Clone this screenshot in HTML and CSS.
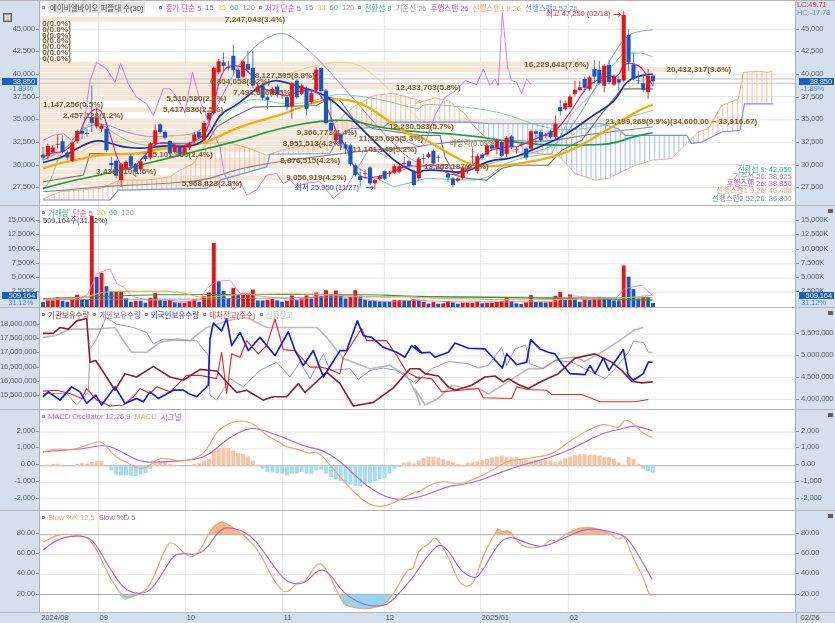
FILE: index.html
```html
<!DOCTYPE html>
<html lang="ko">
<head>
<meta charset="UTF-8">
<title>에이비엘바이오 차트</title>
<link rel="stylesheet" href="styles.css">
</head>
<body>

<div class="chart">

  <!-- 가격 -->
  <section class="pane pane-main">
    <div class="axis axis-left axis-price">
      <span class="menu-btn"><i></i></span>
      <span>45,000</span><span>42,500</span><span>40,000</span><span>37,500</span>
      <span>35,000</span><span>32,500</span><span>30,000</span><span>27,500</span>
      <b class="now-price">38,850</b>
      <em class="now-rate">-1.89%</em>
    </div>
    <div class="plot">
      <svg id="chartMain" viewBox="120 0 2265 615" preserveAspectRatio="none">
        <defs>
          <pattern id="hatchOrange" patternUnits="userSpaceOnUse" width="14.64" height="12">
            <line x1="2" y1="0" x2="2" y2="12" stroke="#f8bb96" stroke-width="3"/>
          </pattern>
          <pattern id="hatchBlue" patternUnits="userSpaceOnUse" width="14.64" height="12">
            <line x1="2" y1="0" x2="2" y2="12" stroke="#9db8f2" stroke-width="3"/>
          </pattern>
        </defs>
      </svg>
      <div class="legend">
        <i class="mark"></i><span class="title">에이비엘바이오 퍼플대 수(30)</span>
        <i class="mark gap-m"></i><span class="c-pink">종가 단순 5</span><span class="c-blue">15</span><span class="c-gold">33</span><span class="c-green">60</span><span class="c-gray">120</span>
        <i class="mark"></i><span class="c-pink">저가 단순 5</span><span class="c-blue">15</span><span class="c-gold">33</span><span class="c-green">60</span><span class="c-gray">120</span>
        <i class="mark"></i><span class="c-teal">전환선 9</span><span class="c-gray">기준선 26</span><span class="c-violet">후행스팬 26</span><span class="c-peach">선행스팬1 9,26</span><span class="c-sky">선행스팬2 52,26</span>
      </div>
    </div>
    <div class="axis axis-right axis-price">
      <span class="lc-hc"><u class="c-red">LC:49.71</u><u class="c-sky">HC:-17.78</u></span>
      <span>45,000</span><span>42,500</span><span>40,000</span><span>37,500</span>
      <span>35,000</span><span>32,500</span><span>30,000</span><span>27,500</span>
      <b class="now-price">38,850</b>
      <em class="now-rate">-1.89%</em>
    </div>
  </section>

  <!-- 거래량 -->
  <section class="pane pane-volume">
    <div class="axis axis-left axis-volume">
      <span>15,000K</span><span>12,500K</span><span>10,000K</span><span>7,500K</span><span>5,000K</span><span>2,500K</span>
      <b class="now-volume">509,164</b>
      <em class="now-share">31.12%</em>
    </div>
    <div class="plot">
      <svg id="chartVolume" viewBox="120 0 2265 306" preserveAspectRatio="none"></svg>
      <div class="legend">
        <i class="mark"></i><span class="c-teal">거래량</span><span class="c-pink">단순 5</span><span class="c-gold">20</span><span class="c-green">60</span><span class="c-gray">120</span>
      </div>
      <div class="legend-sub">509,164주(31.12%)</div>
    </div>
    <div class="axis axis-right axis-volume">
      <span>15,000K</span><span>12,500K</span><span>10,000K</span><span>7,500K</span><span>5,000K</span><span>2,500K</span>
      <span class="fold-btn"></span>
      <b class="now-volume">509,164</b>
      <em class="now-share">31.12%</em>
    </div>
  </section>

  <!-- 보유수량 -->
  <section class="pane pane-holders">
    <div class="axis axis-left axis-holders-left">
      <span>18,000,000</span><span>17,500,000</span><span>17,000,000</span><span>16,500,000</span><span>16,000,000</span><span>15,500,000</span>
    </div>
    <div class="plot">
      <svg id="chartHolders" viewBox="120 306 2265 306" preserveAspectRatio="none"></svg>
      <div class="legend">
        <i class="mark"></i><span class="c-maroon">기관보유수량</span>
        <i class="mark"></i><span class="c-purple">개인보유수량</span>
        <i class="mark"></i><span class="c-navy">외국인보유수량</span>
        <i class="mark"></i><span class="c-red">대차잔고(주수)</span>
        <i class="mark"></i><span class="c-silver">신용잔고</span>
      </div>
    </div>
    <div class="axis axis-right axis-holders-right">
      <span>5,500,000</span><span>5,000,000</span><span>4,500,000</span><span>4,000,000</span>
      <span class="fold-btn"></span>
    </div>
  </section>

  <!-- MACD -->
  <section class="pane pane-macd">
    <div class="axis axis-left axis-macd">
      <span>2,000</span><span>1,000</span><span>0.00</span><span>-1,000</span><span>-2,000</span>
    </div>
    <div class="plot">
      <svg id="chartMacd" viewBox="120 12 2265 303" preserveAspectRatio="none"></svg>
      <div class="legend">
        <i class="mark"></i><span class="c-orchid">MACD Oscillator 12,26,9</span><span class="c-peach">MACD</span><span class="c-plum">시그널</span>
      </div>
    </div>
    <div class="axis axis-right axis-macd">
      <span>2,000</span><span>1,000</span><span>0.00</span><span>-1,000</span><span>-2,000</span>
      <span class="fold-btn"></span>
    </div>
  </section>

  <!-- 스토캐스틱 -->
  <section class="pane pane-slow">
    <div class="axis axis-left axis-slow">
      <span>80.00</span><span>60.00</span><span>40.00</span><span>20.00</span>
    </div>
    <div class="plot">
      <svg id="chartSlow" viewBox="120 315 2265 306" preserveAspectRatio="none"></svg>
      <div class="legend">
        <i class="mark"></i><span class="c-peach">Slow %K 12,5</span><span class="c-plum">Slow %D 5</span>
      </div>
    </div>
    <div class="axis axis-right axis-slow">
      <span>80.00</span><span>60.00</span><span>40.00</span><span>20.00</span>
      <span class="fold-btn"></span>
    </div>
  </section>

  <!-- 날짜 -->
  <footer class="dates">
    <span></span>
    <span>2024/08</span><span>09</span><span>10</span><span>11</span><span>12</span><span>2025/01</span><span>02</span>
    <span>02/26</span>
  </footer>

</div>

<script src="script.js"></script>
</body>
</html>
```

FILE: styles.css
```css
html, body {
  margin: 0;
  padding: 0;
  background: #fff;
}

.chart {
  width: 835px;
  height: 623px;
  overflow: hidden;
  display: flex;
  flex-direction: column;
  font-family: "Liberation Sans", "Noto Sans CJK KR", sans-serif;
  font-size: 8px;
  color: #555;
  filter: blur(0.35px);
}

.pane {
  display: flex;
  border-top: 1.5px solid #b5b5b5;
  box-sizing: border-box;
}
.pane-main { height: 205px; }
.pane-volume { height: 102px; }
.pane-holders { height: 102px; }
.pane-macd { height: 101px; }
.pane-slow { height: 102px; }

.plot {
  position: relative;
  width: 755px;
  background: #fff;
}
.plot svg {
  display: block;
  width: 755px;
  height: 100%;
}

/* 축 */
.axis {
  position: relative;
  width: 40px;
  flex: none;
  box-sizing: border-box;
  display: flex;
  flex-direction: column;
  background: #d4e0ee;
  color: #5c6670;
  font-size: 7.6px;
  letter-spacing: -0.15px;
}
.axis > span {
  height: 12px;
  line-height: 12px;
  white-space: nowrap;
  position: relative;
}
.axis-left {
  text-align: right;
  padding-right: 4px;
  border-right: 1px solid #a9b0b8;
}
.axis-right {
  padding-left: 5px;
  border-left: 1px solid #a9b0b8;
}
.axis-left > span::after,
.axis-right > span::after {
  content: "";
  position: absolute;
  top: 6px;
  width: 3px;
  height: 1px;
  background: #8b949e;
}
.axis-left > span::after { right: -4px; }
.axis-right > span::after { left: -5px; }

.axis-price { padding-top: 21.5px; row-gap: 10.7px; }
.axis-volume { padding-top: 8px; row-gap: 2.3px; }
.axis-holders-left { padding-top: 9.5px; row-gap: 2.4px; }
.axis-holders-right { padding-top: 19.3px; row-gap: 10px; }
.axis-macd { padding-top: 14.7px; row-gap: 4.8px; }
.axis-slow { padding-top: 16.3px; row-gap: 8.1px; }

.axis > span.menu-btn,
.axis > span.lc-hc,
.axis > span.fold-btn {
  position: absolute;
}
.axis > span.menu-btn::after,
.axis > span.lc-hc::after,
.axis > span.fold-btn::after {
  display: none;
}

.axis > span.menu-btn {
  left: 3px;
  top: 12px;
  width: 9px;
  height: 9px;
  box-sizing: border-box;
  background: #a4a4a4;
  border: 1px solid #5e5e5e;
}
.menu-btn i {
  display: block;
  margin: 1px auto;
  width: 5px;
  height: 5px;
  box-sizing: border-box;
  border: 1px solid #e8e8e8;
  border-width: 0 1px;
  background: #d0d0d0;
}

.axis > span.fold-btn {
  right: 2px;
  top: 3px;
  width: 5px;
  height: 4px;
  background: #5f5f5f;
}

.axis > span.lc-hc {
  left: 1px;
  top: 0;
  height: auto;
  line-height: 7.6px;
  display: flex;
  flex-direction: column;
  text-align: left;
  font-size: 7.6px;
}
.lc-hc u { text-decoration: none; }

.now-price,
.now-volume {
  position: absolute;
  height: 7px;
  line-height: 7px;
  width: 35px;
  background: #1560c6;
  color: #e8f0fa;
  font-weight: normal;
  text-align: right;
  padding-right: 2px;
  box-sizing: border-box;
}
.now-price { top: 77px; }
.now-volume { top: 86px; }
.axis-left .now-price, .axis-left .now-volume { left: 2px; }
.axis-right .now-price, .axis-right .now-volume { left: 3px; }

.now-rate,
.now-share {
  position: absolute;
  font-style: normal;
  line-height: 8px;
  color: #4a86e8;
}
.now-rate { top: 84px; }
.now-share { top: 93px; }
.axis-left .now-rate, .axis-left .now-share { right: 6px; }
.axis-right .now-rate, .axis-right .now-share { left: 5px; }

/* 범례 */
.legend {
  position: absolute;
  left: 2px;
  top: 1px;
  display: flex;
  align-items: center;
  height: 10px;
  font-size: 7.5px;
  white-space: nowrap;
  column-gap: 4px;
}
.mark {
  width: 3px;
  height: 3px;
  flex: none;
  background: #fff;
  border: 1px solid #8e8e8e;
  box-sizing: border-box;
  margin-right: -1px;
}
.mark.gap-m { margin-left: 10px; }
.legend .title {
  background: #e2e2e2;
  color: #555;
  padding: 0 2px;
}
.legend-sub {
  position: absolute;
  left: 3px;
  top: 10px;
  font-size: 7.5px;
  line-height: 9px;
  color: #444;
}

.c-pink { color: #e545b5; }
.c-blue { color: #5a78d8; }
.c-gold { color: #f0c050; }
.c-green { color: #50b078; }
.c-gray { color: #9a9a9a; }
.c-teal { color: #3fae94; }
.c-violet { color: #b555d5; }
.c-peach { color: #f3a271; }
.c-sky { color: #6f93e6; }
.c-red { color: #e8342a; }
.c-maroon { color: #8c2a35; }
.c-purple { color: #7562cc; }
.c-navy { color: #2323e0; }
.c-silver { color: #bcbcbc; }
.c-orchid { color: #d652e6; }
.c-plum { color: #a664bd; }

/* 날짜 축 */
.dates {
  height: 11px;
  display: grid;
  grid-template-columns: 40px 58.5px 87px 97px 102px 96px 88px 227px 40px;
  background: #d4e0ee;
  border-top: 1.5px solid #b5b5b5;
  box-sizing: border-box;
  color: #555;
  font-size: 7.6px;
  line-height: 10px;
}
.dates span {
  padding-left: 1px;
  white-space: nowrap;
}
.dates span:last-child {
  padding-left: 4px;
  border-left: 1px solid #a9b0b8;
}

/* svg 선 */
.grid { stroke: #e6e6e6; stroke-width: 3; }
.grid-dark { stroke: #ababab; stroke-width: 3; }
.now-line { stroke: #b5b5b5; stroke-width: 2.5; }
.band { fill: #f7e7d6; }
.line { fill: none; stroke-linejoin: round; stroke-width: 2.4; }
.w-bold { stroke-width: 5; }
.w-mid { stroke-width: 3.4; }
.w-heavy { stroke-width: 7; }
.s-magenta { stroke: #e01fa8; }
.s-chikou { stroke: #cb5fe3; }
.s-navy { stroke: #1232b4; }
.s-gold { stroke: #f0ae0a; }
.s-green { stroke: #1ba045; }
.s-gray { stroke: #8a8a8a; }
.s-dim { stroke: #757575; }
.s-peri { stroke: #7484dc; }
.s-cream { stroke: #f6c771; }
.s-mint { stroke: #62c79a; }
.s-teal { stroke: #42c09a; }
.s-span1 { stroke: #f59a66; }
.s-span2 { stroke: #6e94ee; }
.s-pinkline { stroke: #ea6fd0; }
.s-orange { stroke: #f3b03c; }
.s-maroon { stroke: #8a2432; }
.s-blue { stroke: #0c1cf0; }
.s-lav { stroke: #8574d6; }
.s-red { stroke: #ea2a1e; }
.s-silver { stroke: #bcbcbc; }
.s-macd { stroke: #f5a262; }
.s-signal { stroke: #b565c5; }
.hatch-o { fill: url(#hatchOrange); }
.hatch-b { fill: url(#hatchBlue); }
.wick-r { stroke: #e8140e; stroke-width: 2.6; }
.wick-b { stroke: #2a6ad0; stroke-width: 2.6; }
.body-r { fill: #e8140e; }
.body-b { fill: #1458c8; }
.osc-up { fill: #f9c4a4; }
.osc-down { fill: #a4ddf2; }
.over { fill: #f4b88c; }
.under { fill: #92d6f0; }

.note {
  font-family: "Liberation Sans", "Noto Sans CJK KR", sans-serif;
  font-size: 22.5px;
  white-space: pre;
}
.note-band {
  font-size: 24.5px;
  font-weight: bold;
  fill: #80653a;
}
.note-high { fill: #f0201a; }
.note-low { fill: #2a3ee4; }
.note-drop { fill: #847452; }
.note-tenkan { fill: #38b090; }
.note-kijun { fill: #8c8c8c; }
.note-chikou { fill: #b04fd0; }
.note-span1 { fill: #f3a271; }
.note-span2 { fill: #7090e0; }
```

FILE: script.js
```javascript
// 좌표는 화면의 3배 단위. 오른쪽 절반 자료는 x에 1245를 더해서 쓴다
const NS = 'http://www.w3.org/2000/svg';
const SHIFT = 1245;
const STEP = 14.64;
const X0 = 129;
const MONTHS = [296, 556, 848, 1153, 1442, 1705];

function el(parent, tag, attrs, text) {
  const node = document.createElementNS(NS, tag);
  for (let k in attrs) node.setAttribute(k, attrs[k]);
  if (text) node.textContent = text;
  parent.appendChild(node);
  return node;
}

function pts(left, right) {
  const a = left ? left.trim().split(/\s+/) : [];
  const b = right ? right.trim().split(/\s+/).map(p => {
    const [x, y] = p.split(',');
    return (+x + SHIFT) + ',' + y;
  }) : [];
  return a.concat(b).join(' ');
}

function line(svg, cls, left, right) {
  el(svg, 'polyline', { class: 'line ' + cls, points: pts(left, right) });
}

// 이동평균처럼 부드러운 선
function curve(svg, cls, left, right) {
  const p = pts(left, right).split(' ').map(s => s.split(',').map(Number));
  let d = 'M' + p[0].join(' ');
  for (let i = 1; i < p.length - 1; i++) {
    const mx = (p[i][0] + p[i + 1][0]) / 2;
    const my = (p[i][1] + p[i + 1][1]) / 2;
    d += ' Q' + p[i].join(' ') + ' ' + mx + ' ' + my;
  }
  d += ' L' + p[p.length - 1].join(' ');
  el(svg, 'path', { class: 'line ' + cls, d: d });
}

function gridY(svg, ys, cls) {
  ys.forEach(y => el(svg, 'line', { class: cls || 'grid', x1: 120, x2: 2385, y1: y, y2: y }));
}

function gridX(svg, y1, y2) {
  MONTHS.forEach(x => el(svg, 'line', { class: 'grid', x1: x, x2: x, y1: y1, y2: y2 }));
}

/* ---------- 가격 ---------- */
const main = document.getElementById('chartMain');

const rows = [
  [55, 7247043, '7,247,043(3.4%)'],
  [190, 16229643, '16,229,643(7.6%)'],
  [207, 20432317, '20,432,317(9.6%)'],
  [224, 8127505, '8,127,505(3.8%)'],
  [241, 6804058, '6,804,058(3.2%)'],
  [259, 12433703, '12,433,703(5.8%)'],
  [276, 7493516, '7,493,516(3.5%)'],
  [293, 5510580, '5,510,580(2.6%)'],
  [311, 1147256, '1,147,256(0.5%)'],
  [328, 5417836, '5,417,836(2.5%)'],
  [345, 2457128, '2,457,128(1.2%)'],
  [362, 21199269, '21,199,269(9.9%)(34,600.00 ~ 33,916.67)'],
  [378, 12230533, '12,230,533(5.7%)'],
  [396, 9366773, '9,366,773(4.4%)'],
  [413, 11325095, '11,325,095(5.3%)'],
  [430, 8951513, '8,951,513(4.2%)'],
  [447, 11141149, '11,141,149(5.2%)'],
  [463, 5101930, '5,101,930(2.4%)'],
  [480, 8876515, '8,876,515(4.2%)'],
  [497, 13263187, '13,263,187(6.2%)'],
  [515, 3438210, '3,438,210(1.6%)'],
  [533, 9056919, '9,056,919(4.2%)'],
  [550, 5968823, '5,968,823(2.8%)']
];

rows.forEach(r => {
  el(main, 'rect', { class: 'band', x: 120, y: r[0] - 7.5, width: r[1] / 1e6 * 101.5, height: 15 });
});

gridY(main, [85, 152, 221, 288, 358, 426, 493, 562]);
gridX(main, 0, 615);
gridY(main, [235, 248], 'now-line');

// 일목 구름
const span1L = '129,597 180,575 240,570 300,565 360,540 440,540 510,530 540,510 580,490 620,430 680,425 750,445 800,465 860,445 950,430 990,380 1060,320 1120,285 1180,278 1260,300';
const span1R = '0,310 60,292 100,300 150,340 170,370 220,420 260,450 430,465 480,520 540,540 580,535 650,500 710,480 770,475 820,425 850,395 880,385 920,315 970,295 985,215 1030,212 1060,215 1075,210';
const span2L = '129,600 330,600 355,570 620,565 660,540 800,500 810,462 990,460 1010,420 1050,385 1150,380 1170,365';
const span2R = '0,365 170,365 225,370 560,370 610,385 630,405 815,405 830,430 860,425 880,415 920,395 975,390 988,310 1075,310';

function cloud(cls, from, to) {
  const inRange = s => s.split(' ').filter(p => {
    const x = +p.split(',')[0];
    return x >= from && x <= to;
  });
  const top = inRange(pts(span1L, span1R));
  const bottom = inRange(pts(span2L, span2R)).reverse();
  el(main, 'polygon', { class: cls, points: top.concat(bottom).join(' ') });
}
cloud('hatch-o', 129, 1415);
cloud('hatch-b', 1415, 2065);
cloud('hatch-o', 2065, 2320);

line(main, 's-chikou', '129,420 160,405 190,400 215,420 250,385 270,240 290,185 320,205 345,245 362,188 385,250 410,290 440,310 460,345 490,265 510,265 530,290 555,335 577,215 600,300 620,350 640,400 660,440 672,520 700,570 720,545 740,585 770,570 800,525 830,520 850,550 870,540 890,560 920,548 960,545 1000,595 1040,560 1075,500 1110,440 1160,470 1200,415 1260,440', '30,430 60,345 90,290 120,272 150,240 185,252 205,205 225,255 240,235 250,255 262,35 278,200 290,240 305,245 320,280 335,235 348,252');
curve(main, 's-peri', '129,480 200,450 250,380 310,368 350,385 410,405 470,410 520,405 570,405 620,380 660,300 710,200 760,140 800,110 850,92 900,125 960,180 1030,260 1100,340 1160,410 1220,470 1260,490', '30,500 100,490 150,510 300,470 420,440 470,380 520,300 600,150 640,100 680,90 713,87');
curve(main, 's-cream', '129,490 230,465 300,420 420,430 540,400 620,410 680,320 760,270 860,220 960,190 1020,183 1080,190 1140,240 1200,300 1260,360', '20,360 100,400 160,450 250,480 420,450 540,350 620,270 713,225');
curve(main, 's-mint', '129,570 155,540 170,480 200,440 280,350 340,400 420,440 600,430 640,380 700,320 760,290 860,315 950,300 1000,280 1070,285 1160,300 1260,330', '20,310 100,315 200,325 290,345 360,375 440,390 560,380 640,350 713,330');
line(main, 's-teal', '1040,480 1100,520 1180,560 1245,545', '30,535 180,540 220,530 270,490 330,470 410,460 470,340 530,280 580,210 625,157 680,157 713,168');
line(main, 's-span1', span1L, span1R);
line(main, 's-span2 w-mid', span2L, span2R);
curve(main, 's-gray w-mid', '129,575 200,570 300,560 400,555 500,550 620,540 700,510 800,490 900,475 1030,460 1100,450 1260,440', '0,440 100,425 200,420 290,420 400,425 500,405 620,390 713,380');
line(main, 's-dim w-mid', '129,545 250,525 270,460 440,460 450,430 620,428 650,380 700,350 760,320 950,315 990,290 1020,300 1060,355 1120,385 1260,405', '75,405 90,470 120,525 160,535 215,540 260,505 300,495 400,495 440,450 500,420 560,340 620,265 713,265');
curve(main, 's-green w-bold', '129,565 200,545 300,525 400,500 480,480 560,460 640,440 720,420 800,395 880,375 960,362 1040,358 1100,370 1160,385 1260,395', '20,395 100,400 200,410 290,425 400,435 490,435 590,432 650,410 713,397');
curve(main, 's-gold w-heavy', '129,505 170,490 230,480 300,462 360,462 420,460 480,445 540,440 620,428 680,395 760,365 840,345 900,320 970,298 1040,295 1100,315 1170,365 1230,405', '20,410 60,435 110,465 170,495 230,500 320,490 420,470 490,440 540,410 600,375 660,335 713,312');
curve(main, 's-navy w-bold', '129,487 160,478 190,470 230,445 270,425 300,420 340,432 370,440 420,445 470,440 510,435 560,440 600,430 630,400 660,340 700,320 740,290 780,255 820,238 860,245 900,260 940,270 985,290 1020,320 1060,360 1100,400 1140,440 1180,480 1230,510 1260,520', '20,510 80,510 150,520 220,480 290,475 350,450 430,415 480,385 540,340 600,305 630,245 670,225 713,220');
curve(main, 's-magenta w-mid', '129,470 160,455 190,458 230,420 260,345 290,320 310,340 330,400 350,470 370,510 400,505 430,470 465,430 500,425 540,440 580,425 620,400 640,320 660,230 680,195 720,195 750,215 775,260 810,270 860,290 900,270 940,270 965,285 990,340 1010,400 1040,440 1060,500 1080,530 1110,535 1150,525 1190,510 1220,495', '20,500 60,490 100,525 140,520 180,490 220,450 270,440 310,440 350,420 400,400 430,385 470,330 510,265 540,240 580,225 610,230 625,188 660,188 685,205 713,255');

// 캔들: [색, 몸통 위, 몸통 아래, 꼬리 위, 꼬리 아래]
const candles = [
  ['b',463,472,440,480],['r',437,468,430,478],['r',442,456,435,460],['r',431,433,405,445],['b',423,455,405,460],
  ['b',457,472,450,480],['r',428,482,425,485],['r',392,423,388,430],['b',392,400,380,415],['b',399,401,385,410],
  ['b',350,367,255,395],['r',350,378,320,385],['r',375,385,370,395],['b',385,450,380,455],['b',488,495,470,510],
  ['b',482,527,478,535],['r',492,540,488,560],['r',485,503,480,510],['b',468,498,462,505],['b',492,515,488,530],
  ['r',483,508,478,515],['b',468,476,462,482],['r',430,472,425,478],['r',390,430,372,435],['b',372,395,368,400],
  ['b',395,412,390,418],['b',422,460,420,465],['r',437,455,430,460],['b',440,462,435,468],['r',440,460,435,465],
  ['r',430,442,425,448],['r',402,422,395,428],['b',395,412,388,418],['r',368,418,362,422],['r',338,357,330,362],
  ['r',202,338,198,342],['r',182,215,175,220],['b',185,195,155,210],['b',199,201,180,210],['b',165,208,132,220],
  ['b',208,232,200,240],['r',182,228,178,232],['b',190,207,150,218],['b',202,255,150,262],['r',258,275,252,282],
  ['b',255,292,248,300],['b',290,298,285,325],['r',265,280,260,285],['b',258,280,252,290],['r',281,283,272,295],
  ['b',290,320,285,330],['r',248,318,244,355],['b',240,290,236,295],['r',255,280,250,285],['b',265,325,258,345],
  ['r',278,305,272,310],['r',207,270,200,275],['b',202,272,200,280],['b',270,368,265,372],['b',368,390,300,395],
  ['r',400,420,392,425],['b',402,430,398,450],['b',432,445,425,460],['b',435,492,430,498],['b',495,525,490,530],
  ['b',528,540,505,560],['r',519,521,508,535],['b',502,550,498,555],['r',540,550,535,568],['r',528,537,524,540],
  ['b',513,536,510,540],['r',519,522,512,530],['r',498,518,492,522],['r',498,515,494,520],['r',488,491,470,510],
  ['b',483,497,478,505],['b',512,555,508,558],['r',475,535,470,540],['b',474,476,460,490],['r',462,470,455,475],
  ['b',452,490,448,495],['r',470,472,465,485],['r',493,495,490,505],['b',522,532,515,545],['b',535,555,530,560],
  ['r',535,542,530,548],['r',503,533,498,538],['r',505,508,498,520],['r',469,471,445,490],['r',468,513,460,520],
  ['b',463,473,458,480],['r',435,463,430,468],['b',435,445,430,450],['r',420,445,415,462],['b',425,467,420,470],
  ['r',412,462,408,470],['b',408,440,404,446],['r',447,449,440,460],['r',432,434,428,440],['b',445,472,440,480],
  ['r',393,445,388,450],['b',393,400,388,428],['b',395,420,390,425],['r',403,406,398,412],['b',393,410,388,415],
  ['r',370,410,345,415],['b',320,332,298,345],['r',308,325,300,330],['r',288,320,282,325],['r',268,280,240,288],
  ['r',260,268,240,272],['b',235,262,228,275],['r',230,265,225,270],['b',205,228,178,248],['b',208,248,180,252],
  ['r',195,255,190,275],['b',193,245,178,252],['r',228,252,222,256],['b',236,246,225,270],['r',42,240,30,245],
  ['b',102,185,85,212],['b',192,232,155,240],['b',239,241,212,250],['b',248,268,225,275],['r',225,275,205,295],
  ['b',225,242,222,258]
];

candles.forEach((c, i) => {
  const x = X0 + STEP * i;
  el(main, 'line', { class: 'wick-' + c[0], x1: x, x2: x, y1: c[3], y2: c[4] });
  el(main, 'rect', { class: 'body-' + c[0], x: x - 6.2, y: c[1], width: 12.4, height: c[2] - c[1] });
});

// 매물대 수치
rows.forEach(r => {
  const end = Math.max(120 + r[1] / 1e6 * 101.5, 310);
  el(main, 'text', { class: 'note note-band', x: end, y: r[0] + 8, 'text-anchor': 'end' }, r[2]);
});
[68, 85, 103, 120, 138, 155, 172].forEach(y => {
  el(main, 'text', { class: 'note note-band', x: 127, y: y + 8 }, '0(0.0%)');
});

el(main, 'text', { class: 'note note-high', x: 1638, y: 46 }, '최고 47,250 (02/18)');
el(main, 'path', { d: 'M1840 41h22m-7 -6l7 6l-7 6', fill: 'none', stroke: '#f0201a', 'stroke-width': 3 });
el(main, 'text', { class: 'note note-low', x: 885, y: 570 }, '최저 25,950 (11/27)');
el(main, 'path', { d: 'M1098 563h22m-7 -6l7 6l-7 6', fill: 'none', stroke: '#2a3ee4', 'stroke-width': 3 });
el(main, 'text', { class: 'note note-drop', x: 1350, y: 438 }, '배당락(0.09%)');

[
  ['note-tenkan', 516, '전환선 9: 42,050'],
  ['note-kijun', 536, '기준선 26: 38,925'],
  ['note-chikou', 558, '후행스팬 26: 38,850'],
  ['note-span1', 580, '선행스팬1 9,26: 40,488'],
  ['note-span2', 602, '선행스팬2 52,26: 36,800']
].forEach(n => {
  el(main, 'text', { class: 'note ' + n[0], x: 2375, y: n[1], 'text-anchor': 'end' }, n[2]);
});

/* ---------- 거래량 ---------- */
const vol = document.getElementById('chartVolume');
gridY(vol, [46, 89, 132, 175, 218, 261]);
gridX(vol, 0, 306);

const bars = 'b291 r286 r286 r277 b287 b290 r281 r269 b283 b283 r30 b215 r203 b243 b258 r258 r257 b280 b290 r287 b287 b293 r278 r264 b285 b287 r285 b292 b293 r293 r288 r283 b290 r273 r262 r112 b228 b257 b280 r248 b268 r265 r265 r253 b286 b286 r284 r282 b286 b290 r287 r271 b285 r280 r271 b280 r262 b273 r255 b268 r256 b270 b280 r275 r255 b272 b284 b287 b287 b289 b290 b290 r285 r285 b286 b287 r283 b286 r290 b296 r291 b296 r295 r288 b292 b296 r293 r293 r294 r289 b295 r293 r293 r291 r288 r278 b288 b295 b297 r292 r270 b291 b291 b292 r291 r272 r261 b285 r268 b278 b290 r282 b285 r281 r275 b278 b280 b286 b286 r180 b214 b252 b280 r276 b276 b294'.split(' ');

bars.forEach((b, i) => {
  const top = +b.slice(1);
  el(vol, 'rect', { class: 'body-' + b[0], x: X0 + STEP * i - 5.8, y: top, width: 11.6, height: 306 - top });
});

line(vol, 's-gray', '129,283 600,282 1000,276 1260,275', '0,275 713,278');
curve(vol, 's-green w-mid', '129,281 400,270 540,268 800,268 1130,268 1180,272 1260,274', '80,275 240,277 450,280 713,285');
curve(vol, 's-orange w-mid', '129,283 260,280 300,260 400,258 540,258 600,280 700,268 900,265 1000,270 1100,275 1260,275', '0,278 300,285 500,282 620,280 713,270');
line(vol, 's-pinkline', '129,283 240,283 265,265 290,205 330,190 350,235 370,245 400,275 440,285 510,285 540,290 600,285 620,250 650,228 690,225 720,265 800,275 900,285 960,270 1050,270 1100,285 1160,290 1260,285', '0,285 100,290 300,290 420,290 470,272 600,282 630,250 680,240 713,272');

/* ---------- 보유수량 ---------- */
const holders = document.getElementById('chartHolders');
gridY(holders, [385, 451, 517, 583]);
gridX(holders, 306, 612);

line(holders, 's-silver w-bold', '129,395 165,390 210,370 290,370 345,365 370,405 395,440 440,440 480,410 530,400 570,405 620,365 700,340 740,335 800,365 950,365 980,395 1030,460 1060,470 1110,490 1170,480 1220,510 1250,570 1260,600', '0,550 30,600 70,580 110,540 160,550 190,550 220,567 270,535 340,490 380,490 430,460 480,455 510,467 560,440 620,400 660,372 685,365');
line(holders, 's-lav', '129,565 200,565 230,600 265,560 270,430 290,400 318,335 350,355 400,365 440,380 460,415 490,400 540,405 590,405 625,450 630,570 650,585 690,520 730,545 780,495 830,470 870,515 900,470 930,520 970,445 990,495 1050,490 1075,522 1110,495 1150,488 1190,495 1240,530 1260,520', '0,535 50,490 100,468 160,475 190,488 220,480 260,425 275,480 300,430 332,418 345,475 385,490 420,465 470,470 510,490 570,520 600,490 640,440 655,408 685,410 700,440 713,440');
line(holders, 's-red w-mid', '129,558 170,555 210,565 245,580 260,550 290,585 330,603 370,600 400,575 420,550 450,565 470,545 510,560 560,510 600,510 650,520 665,440 680,565 695,445 720,455 740,405 775,445 800,420 825,340 850,432 885,435 930,485 960,485 985,490 1020,505 1030,455 1085,368 1100,405 1160,405 1190,450 1220,500 1260,520', '0,515 50,520 80,560 190,550 205,578 290,580 305,545 340,553 395,555 410,568 500,568 555,590 660,590 700,583');
line(holders, 's-maroon w-bold', '129,383 160,383 180,365 205,370 230,345 260,338 270,470 287,465 310,500 345,555 375,505 410,515 460,483 510,515 550,525 600,492 650,497 680,530 710,562 740,555 790,585 820,575 860,575 895,535 915,562 980,500 1020,535 1060,603 1120,592 1180,548 1230,490 1260,490', '15,492 30,505 70,512 100,545 120,555 170,540 210,515 240,512 265,530 280,520 310,538 340,550 380,528 430,505 480,458 540,445 590,470 620,495 650,528 680,533 713,530');
line(holders, 's-blue w-bold', '129,575 145,560 180,585 215,545 240,560 260,595 287,570 305,600 345,545 375,595 410,580 430,590 450,560 475,580 520,555 550,555 565,565 590,575 625,540 630,400 640,352 665,375 680,338 695,420 720,380 745,435 780,395 825,450 865,378 885,435 910,480 940,435 970,515 1020,435 1040,435 1072,345 1090,390 1115,395 1150,425 1190,440 1215,455 1235,420 1260,440', '0,420 20,442 45,440 60,455 100,440 120,412 160,428 210,430 262,488 275,445 305,478 335,470 347,402 375,430 400,440 420,445 440,475 465,505 510,508 525,480 540,505 565,458 582,495 625,432 640,510 655,525 685,505 700,470 713,470');

/* ---------- MACD ---------- */
const macd = document.getElementById('chartMacd');
gridY(macd, [79, 130, 232, 281]);
gridX(macd, 12, 315);
gridY(macd, [181], 'grid-dark');

const osc = [181,177,175,175,178,182,182,175,173,174,170,166,167,181,195,208,210,210,211,212,207,203,190,172,168,170,175,178,181,183,182,176,173,165,160,133,127,126,127,135,143,145,152,165,177,190,200,201,204,205,210,205,205,200,205,205,195,192,205,215,222,228,235,238,242,243,238,233,228,222,218,205,190,185,172,170,174,165,157,153,153,156,160,165,170,176,178,172,170,168,164,160,156,153,150,155,155,155,160,162,165,163,164,163,165,170,165,158,152,148,146,146,148,148,150,155,155,160,170,177,155,160,175,190,197,202];

osc.forEach((v, i) => {
  el(macd, 'rect', {
    class: v < 181 ? 'osc-up' : 'osc-down',
    x: X0 + STEP * i - 6,
    y: Math.min(v, 181),
    width: 12,
    height: Math.abs(v - 181)
  });
});

curve(macd, 's-signal w-mid', '129,138 200,133 250,130 310,117 350,130 420,170 470,170 550,167 620,155 680,100 740,68 770,67 840,90 920,125 960,130 1020,165 1100,245 1180,287 1260,278', '100,242 135,240 200,225 290,187 410,155 480,125 550,88 590,75 612,72 650,60 670,62 712,75');
curve(macd, 's-macd w-mid', '129,140 160,130 190,130 220,133 250,122 290,108 310,110 345,155 385,172 410,190 440,188 470,162 490,157 520,163 550,168 590,158 620,135 650,75 690,50 735,43 770,60 800,90 840,110 855,123 900,132 925,145 955,137 1000,190 1050,250 1100,295 1140,307 1180,295 1220,272 1260,255', '0,268 50,235 90,227 130,238 180,222 240,190 280,165 320,162 360,155 410,147 460,110 490,90 540,62 565,55 590,60 612,68 628,40 650,48 685,85 712,95');

/* ---------- Slow ---------- */
const slow = document.getElementById('chartSlow');
gridY(slow, [447, 508]);
gridX(slow, 315, 621);

el(slow, 'polygon', { class: 'over', points: '625,387 635,365 665,345 700,365 725,387' });
el(slow, 'polygon', { class: 'over', points: pts('', '240,387 247,365 262,380 278,372 300,387') });
el(slow, 'polygon', { class: 'over', points: pts('', '450,387 495,365 535,365 590,387') });
el(slow, 'polygon', { class: 'under', points: '355,568 375,585 420,568' });
el(slow, 'polygon', { class: 'under', points: '1015,568 1030,600 1070,610 1110,612 1150,600 1180,568' });

gridY(slow, [387, 568], 'grid-dark');

curve(slow, 's-macd w-mid', '129,410 160,392 190,384 230,388 265,395 295,440 330,520 375,585 420,565 450,545 500,415 520,408 565,457 595,447 635,365 665,345 700,365 740,395 780,440 820,525 855,567 880,545 900,527 915,533 955,463 985,500 1030,600 1070,610 1110,612 1150,600 1180,570 1220,492 1240,492', '0,468 15,428 45,415 60,388 100,450 130,532 160,547 180,525 200,460 247,365 262,380 278,372 310,410 335,428 385,425 405,400 425,408 450,385 495,365 535,365 590,385 612,405 628,385 650,450 685,515 700,565 712,573');
curve(slow, 's-signal w-mid', '129,433 170,400 220,390 265,393 290,420 330,490 370,550 410,567 450,560 490,500 520,448 550,443 590,448 620,430 660,370 690,364 740,380 780,420 850,525 890,538 920,530 955,492 985,497 1030,565 1090,600 1140,604 1170,595 1210,550', '0,508 30,460 65,420 80,418 105,440 135,495 175,520 195,510 250,412 285,390 340,415 385,425 430,405 495,375 530,368 575,375 628,388 650,415 680,465 712,523');
```
